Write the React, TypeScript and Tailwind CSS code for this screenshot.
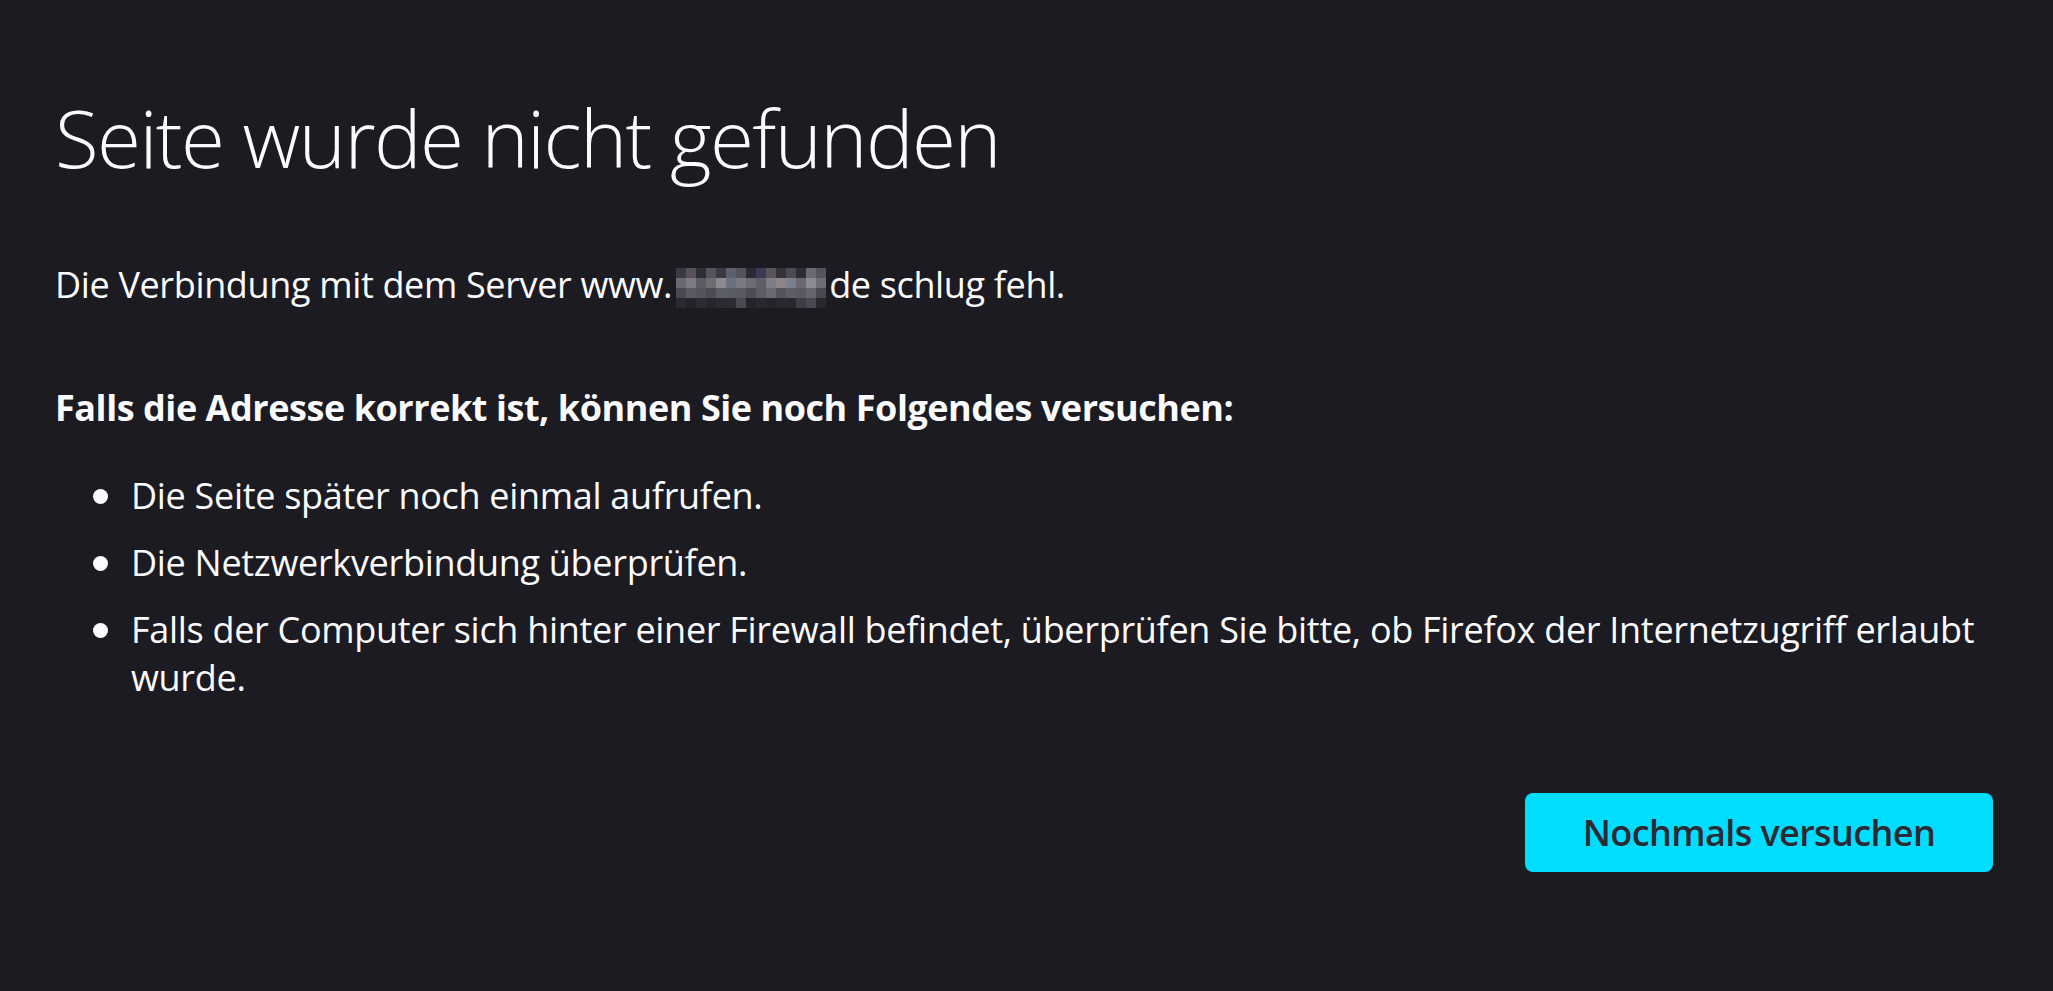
import * as React from "react";

// pixelated (blurred) domain part of the server name
const MOSAIC: string[][] = [
  ["#3b3a42", "#5a5258", "#2f2e36", "#55535b", "#3a3940", "#5b5f6e", "#55525a", "#2c2b33", "#3a3a52", "#58545a", "#34333b", "#4c4a52", "#2e2d35", "#6b6a72", "#55545c"],
  ["#6a6870", "#7c7a82", "#5c5a62", "#6e6d74", "#8a8a90", "#6d7080", "#7a7880", "#6c6a72", "#5e5d68", "#7e7c84", "#8c8688", "#7a8090", "#6a6870", "#8a8a92", "#6e6c74"],
  ["#4a4850", "#5a5860", "#55535b", "#4c4a52", "#5c5e66", "#585c66", "#5a5860", "#4e4c54", "#5c5a62", "#6a6870", "#55535b", "#5e5c64", "#5a5860", "#666470", "#4a4850"],
  ["#2a2930", "#24232a", "#2c2b32", "#26252c", "#2a2930", "#2c2b32", "#4a4950", "#25242b", "#2a2930", "#26252c", "#2a2930", "#28272e", "#3e3d45", "#4a4950", "#28272e"],
];

function Blurred() {
  return (
    <svg width="152" height="42" viewBox="0 0 150 42" className="inline-block align-[-10px] ml-[3px] mr-[2px]">
      {MOSAIC.flatMap((row, r) =>
        row.map((c, i) => <rect key={`${r}-${i}`} x={i * 10} y={2 + r * 10} width="10" height="10" fill={c} />)
      )}
    </svg>
  );
}

const tips = [
  "Die Seite später noch einmal aufrufen.",
  "Die Netzwerkverbindung überprüfen.",
  "Falls der Computer sich hinter einer Firewall befindet, überprüfen Sie bitte, ob Firefox der Internetzugriff erlaubt wurde.",
];

export default function App() {
  return (
    <div className="min-h-screen w-full bg-[#1c1b22] text-[#fbfbfe] font-['Open_Sans','Noto_Sans',sans-serif]">
      <div className="pl-[55px] pr-[60px] pt-[89px] pb-10">
        <h1 className="text-[80px] leading-[96px] font-light tracking-[-1.6px]">Seite wurde nicht gefunden</h1>

        <p className="mt-[76px] text-[36px] leading-[48px] tracking-[-0.35px]">
          Die Verbindung mit dem Server www.<Blurred />de schlug fehl.
        </p>

        <p className="mt-[75px] text-[36px] leading-[48px] font-bold tracking-[-0.45px]">
          Falls die Adresse korrekt ist, können Sie noch Folgendes versuchen:
        </p>

        <ul className="mt-[40px] flex flex-col gap-[19px] pl-[76px]">
          {tips.map((t) => (
            <li key={t} className="relative text-[36px] leading-[48px] tracking-[-0.3px]">
              <span className="absolute -left-[38px] top-[17px] h-[15px] w-[15px] rounded-full bg-[#fbfbfe]" />
              {t}
            </li>
          ))}
        </ul>

        <div className="mt-[91px] flex justify-end">
          <button className="h-[79px] w-[468px] rounded-[8px] bg-[#00ddff] text-[36px] font-semibold text-[#2b2a33] tracking-[-0.6px]">
            Nochmals versuchen
          </button>
        </div>
      </div>
    </div>
  );
}
